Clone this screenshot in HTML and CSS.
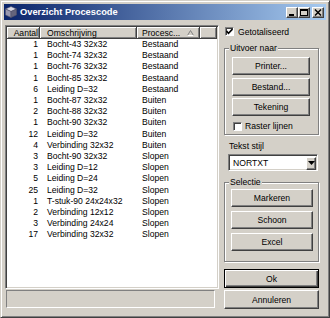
FILE: index.html
```html
<!DOCTYPE html>
<html lang="nl">
<head>
    <meta charset="UTF-8">
    <title>Overzicht Procescode</title>
    <link rel="stylesheet" href="styles.css">
</head>
<body>
    <div class="window">
        <!-- Titelbalk -->
        <div class="titlebar">
            <svg class="app-icon" width="12" height="12" viewBox="0 0 12 12">
                <polygon points="6,0.5 11.5,3 6,5.5 0.5,3" fill="#d8d8e4" stroke="#505068" stroke-width="0.6"/>
                <polygon points="0.5,3 6,5.5 6,11.5 0.5,9" fill="#9898b0" stroke="#505068" stroke-width="0.6"/>
                <polygon points="11.5,3 6,5.5 6,11.5 11.5,9" fill="#64647c" stroke="#505068" stroke-width="0.6"/>
            </svg>
            <span class="title">Overzicht Procescode</span>
            <div class="caption-buttons">
                <span class="cap-btn"><svg width="10" height="9" viewBox="0 0 10 9"><rect x="2" y="6" width="5" height="2" fill="#000"/></svg></span>
                <span class="cap-btn"><svg width="10" height="9" viewBox="0 0 10 9"><rect x="1.5" y="1.5" width="7" height="6" fill="none" stroke="#000"/><rect x="1" y="1" width="8" height="2" fill="#000"/></svg></span>
                <span class="cap-btn cap-close"><svg width="10" height="9" viewBox="0 0 10 9"><path d="M2 1.5 L8 7.5 M8 1.5 L2 7.5" stroke="#000" stroke-width="1.5"/></svg></span>
            </div>
        </div>

        <div class="content">
            <!-- Lijst met procescodes -->
            <div class="left">
                <div class="listview">
                    <table>
                        <colgroup>
                            <col class="col-aantal">
                            <col class="col-omschr">
                            <col class="col-proces">
                            <col class="col-rest">
                        </colgroup>
                        <thead>
                            <tr>
                                <th class="num">Aantal</th>
                                <th class="omschr">Omschrijving</th>
                                <th class="proces">Procesc...<svg class="sort-arrow" width="7" height="6" viewBox="0 0 7 6"><path d="M0.5 5.5 L3.5 0.5 L6.5 5.5" fill="none" stroke="#808080"/><path d="M0.5 5.5 L6.5 5.5" stroke="#fff"/></svg></th>
                                <th></th>
                            </tr>
                        </thead>
                        <tbody id="rows">
                            <!-- rijen worden dynamisch ingevoegd -->
                        </tbody>
                    </table>
                </div>
                <div class="statusbar"></div>
            </div>

            <!-- Opties -->
            <div class="right">
                <div class="check-row">
                    <span class="checkbox"><svg width="7" height="7" viewBox="0 0 7 7"><path d="M0.5 3 L2.5 5.3 L6.5 1" fill="none" stroke="#000" stroke-width="1.6"/></svg></span>
                    <span class="check-label">Getotaliseerd</span>
                </div>

                <div class="group group-uitvoer">
                    <span class="group-title">Uitvoer naar</span>
                    <div class="btn-stack">
                        <button class="btn">Printer...</button>
                        <button class="btn">Bestand...</button>
                        <button class="btn">Tekening</button>
                    </div>
                    <div class="check-row check-raster">
                        <span class="checkbox"></span>
                        <span class="check-label">Raster lijnen</span>
                    </div>
                </div>

                <div class="field-label">Tekst stijl</div>
                <div class="combo">
                    <span class="combo-text">NORTXT</span>
                    <span class="combo-btn"><svg width="7" height="4" viewBox="0 0 7 4"><polygon points="0,0 7,0 3.5,4" fill="#000"/></svg></span>
                </div>

                <div class="group group-selectie">
                    <span class="group-title">Selectie</span>
                    <div class="btn-stack wide">
                        <button class="btn">Markeren</button>
                        <button class="btn">Schoon</button>
                        <button class="btn">Excel</button>
                    </div>
                </div>

                <button class="btn btn-default">Ok</button>
                <button class="btn btn-cancel">Annuleren</button>
            </div>
        </div>
    </div>

    <script>
        // Procescodes
        const items = [
            { aantal: 1, omschrijving: "Bocht-43 32x32", proces: "Bestaand" },
            { aantal: 1, omschrijving: "Bocht-74 32x32", proces: "Bestaand" },
            { aantal: 1, omschrijving: "Bocht-76 32x32", proces: "Bestaand" },
            { aantal: 1, omschrijving: "Bocht-85 32x32", proces: "Bestaand" },
            { aantal: 6, omschrijving: "Leiding D=32", proces: "Bestaand" },
            { aantal: 1, omschrijving: "Bocht-87 32x32", proces: "Buiten" },
            { aantal: 2, omschrijving: "Bocht-88 32x32", proces: "Buiten" },
            { aantal: 1, omschrijving: "Bocht-90 32x32", proces: "Buiten" },
            { aantal: 12, omschrijving: "Leiding D=32", proces: "Buiten" },
            { aantal: 4, omschrijving: "Verbinding 32x32", proces: "Buiten" },
            { aantal: 3, omschrijving: "Bocht-90 32x32", proces: "Slopen" },
            { aantal: 3, omschrijving: "Leiding D=12", proces: "Slopen" },
            { aantal: 5, omschrijving: "Leiding D=24", proces: "Slopen" },
            { aantal: 25, omschrijving: "Leiding D=32", proces: "Slopen" },
            { aantal: 1, omschrijving: "T-stuk-90 24x24x32", proces: "Slopen" },
            { aantal: 2, omschrijving: "Verbinding 12x12", proces: "Slopen" },
            { aantal: 3, omschrijving: "Verbinding 24x24", proces: "Slopen" },
            { aantal: 17, omschrijving: "Verbinding 32x32", proces: "Slopen" },
        ];

        function renderRows() {
            const tbody = document.getElementById("rows");
            tbody.innerHTML = "";
            items.forEach(item => {
                const row = document.createElement("tr");
                row.innerHTML = `
                    <td class="num">${item.aantal}</td>
                    <td class="omschr">${item.omschrijving}</td>
                    <td class="proces">${item.proces}</td>
                    <td></td>
                `;
                tbody.appendChild(row);
            });
        }

        renderRows();
    </script>
</body>
</html>
```

FILE: styles.css
```css
* {
    box-sizing: border-box;
}
body {
    margin: 0;
    font-family: "Liberation Sans", Arial, sans-serif;
    font-size: 8.6px;
    color: #000;
    background: #d4d0c8;
}
.window {
    width: 330px;
    height: 318px;
    background: #d4d0c8;
    border: 1px solid;
    border-color: #d4d0c8 #404040 #404040 #d4d0c8;
    box-shadow: inset 1px 1px 0 #fff, inset -1px -1px 0 #808080;
    padding: 3px;
}

/* titelbalk */
.titlebar {
    height: 16px;
    display: flex;
    align-items: center;
    padding: 0 2px 0 1px;
    background: linear-gradient(to right, #0a246a, #a6caf0);
}
.app-icon {
    flex: none;
}
.title {
    margin-left: 3px;
    color: #fff;
    font-weight: bold;
    font-size: 9.3px;
    white-space: nowrap;
}
.caption-buttons {
    margin-left: auto;
    display: flex;
}
.cap-btn {
    width: 12px;
    height: 11px;
    display: flex;
    background: #d4d0c8;
    border: 1px solid;
    border-color: #fff #404040 #404040 #fff;
    box-shadow: inset -1px -1px 0 #808080;
}
.cap-close {
    margin-left: 2px;
}

/* inhoud */
.content {
    display: flex;
    gap: 5px;
    padding: 5px 1px 0 1px;
}
.left {
    width: 214px;
}
.listview {
    height: 264px;
    background: #fff;
    border: 1px solid;
    border-color: #808080 #fff #fff #808080;
    box-shadow: inset 1px 1px 0 #404040, inset -1px -1px 0 #d4d0c8;
    padding: 1px;
    overflow: hidden;
}
table {
    width: 210px;
    table-layout: fixed;
    border-collapse: separate;
    border-spacing: 0;
}
.col-aantal { width: 33px; }
.col-omschr { width: 97px; }
.col-proces { width: 63px; }
.col-rest { width: 17px; }
th {
    height: 12px;
    padding: 0;
    font-weight: normal;
    text-align: left;
    line-height: 10px;
    background: #d4d0c8;
    border-right: 1px solid #404040;
    border-bottom: 1px solid #404040;
    box-shadow: inset 1px 1px 0 #fff, inset -1px -1px 0 #808080;
    white-space: nowrap;
}
td {
    padding: 0;
    line-height: 11.2px;
    white-space: nowrap;
    overflow: hidden;
}
th.num, td.num {
    text-align: right;
}
th.num {
    padding-right: 1px;
}
td.num {
    padding-right: 2px;
}
.omschr {
    padding-left: 7px;
}
.proces {
    padding-left: 5px;
}
.sort-arrow {
    margin-left: 7px;
    vertical-align: -0.5px;
}
.statusbar {
    width: 209px;
    height: 18px;
    margin: 1px 0 0 1px;
    border: 1px solid;
    border-color: #808080 #fff #fff #808080;
}

/* rechterkolom */
.right {
    width: 95px;
    display: flex;
    flex-direction: column;
}
.check-row {
    display: flex;
    align-items: center;
    height: 13px;
}
.checkbox {
    width: 9px;
    height: 9px;
    margin-left: 1px;
    display: flex;
    align-items: center;
    justify-content: center;
    background: #fff;
    border: 1px solid;
    border-color: #808080 #fff #fff #808080;
    box-shadow: inset 1px 1px 0 #404040;
}
.check-label {
    margin-left: 4px;
    white-space: nowrap;
}
.check-raster {
    height: 12px;
    margin-top: 4px;
}
.check-raster .check-label {
    margin-left: 3px;
}
.group {
    position: relative;
    border: 1px solid #808080;
    box-shadow: inset 1px 1px 0 #fff, 1px 1px 0 #fff;
}
.group-title {
    position: absolute;
    top: -6px;
    left: 4px;
    padding: 0 1px;
    line-height: 10px;
    background: #d4d0c8;
}
.group-uitvoer {
    margin-top: 10px;
    padding: 8px 7px 2px 7px;
}
.group-selectie {
    margin-top: 10.5px;
    padding: 6.5px 5px 10px 6px;
}
.btn-stack {
    display: flex;
    flex-direction: column;
    gap: 2.5px;
    margin-right: 1px;
}
.btn-stack.wide {
    gap: 4px;
    margin-right: 0;
}
.btn {
    height: 18px;
    padding: 0;
    font-family: inherit;
    font-size: inherit;
    color: #000;
    background: #d4d0c8;
    border: 1px solid;
    border-color: #fff #404040 #404040 #fff;
    border-radius: 0;
    box-shadow: inset -1px -1px 0 #808080;
}
.field-label {
    margin: 5.5px 0 0 5px;
    line-height: 11px;
}
.combo {
    width: 90px;
    height: 17px;
    margin: 2.5px 0 0 4px;
    display: flex;
    align-items: center;
    background: #fff;
    border: 1px solid;
    border-color: #808080 #fff #fff #808080;
    box-shadow: inset 1px 1px 0 #404040, inset -1px -1px 0 #d4d0c8;
    padding: 2px 1px 1px 4px;
}
.combo-text {
    flex: 1;
}
.combo-btn {
    width: 10px;
    height: 13px;
    display: flex;
    align-items: center;
    justify-content: center;
    background: #d4d0c8;
    border: 1px solid;
    border-color: #fff #404040 #404040 #fff;
    box-shadow: inset -1px -1px 0 #808080;
}
.btn-default {
    height: 19px;
    margin-top: 7px;
    border: 1px solid #000;
    box-shadow: inset 1px 1px 0 #fff, inset -1px -1px 0 #404040, inset -2px -2px 0 #808080;
}
.btn-cancel {
    height: 19px;
    margin-top: 2px;
}
```
